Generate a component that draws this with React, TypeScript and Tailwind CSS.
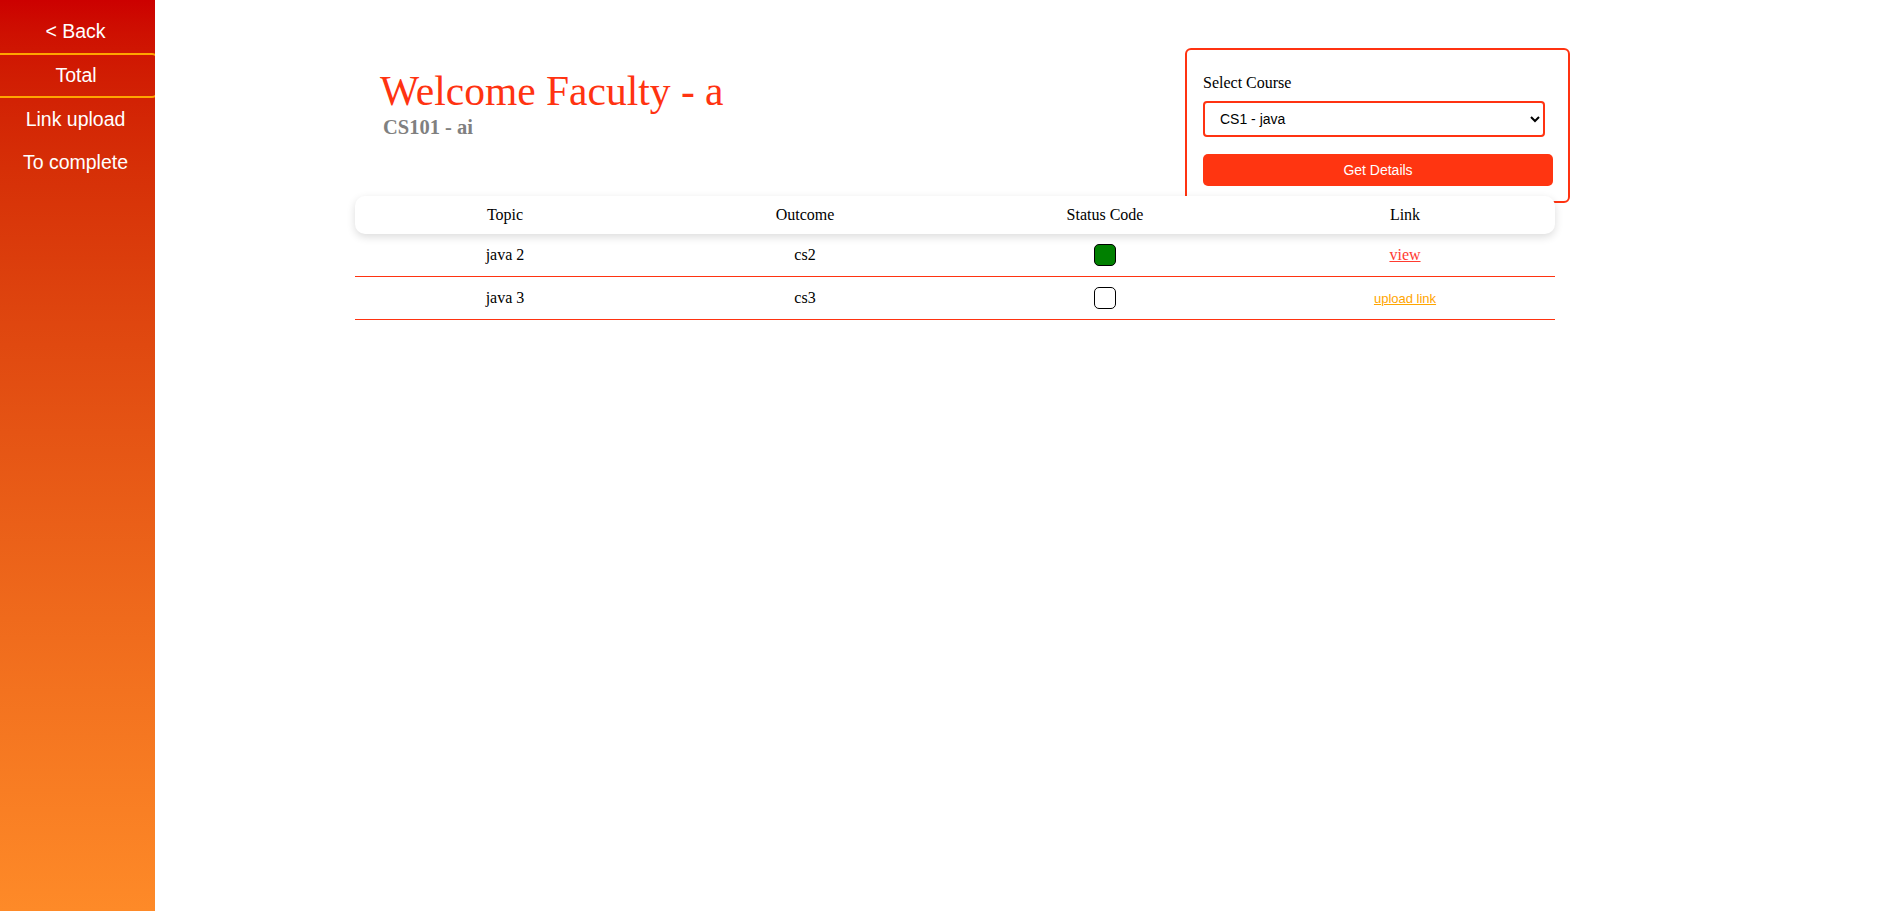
const rows = [
  { topic: "java 2", outcome: "cs2", done: true },
  { topic: "java 3", outcome: "cs3", done: false },
];

const serif = "font-['Liberation_Serif','Times_New_Roman',serif]";
const sans = "font-['Liberation_Sans',Arial,sans-serif]";

function Sidebar() {
  return (
    <aside
      className={`w-[155px] shrink-0 min-h-[911px] overflow-hidden bg-gradient-to-b from-[#cc0000] to-[#fe8a28] pt-[10px] pr-[4px] text-white text-[19.5px] ${sans}`}
    >
      <div className="h-[43px] flex items-center justify-center">&lt; Back</div>
      <div className="h-[45px] ml-[-6px] mr-[-7px] flex items-center justify-center border-2 border-[#ffa500] rounded-[6px]">
        Total
      </div>
      <div className="h-[43px] flex items-center justify-center">Link upload</div>
      <div className="h-[43px] flex items-center justify-center">To complete</div>
    </aside>
  );
}

function CoursePicker() {
  return (
    <div className="w-[385px] h-[155px] mr-[-15px] mb-[-7px] border-2 border-[#ff3311] rounded-[6px] pt-[24px] px-[16px]">
      <label className={`block text-[16px] leading-[18px] text-black ${serif}`}>Select Course</label>
      <select
        className={`mt-[9px] w-[342px] h-[36px] border-2 border-[#ff3311] rounded-[4px] pl-[11px] pr-[4px] text-[14px] text-black bg-white ${sans}`}
        defaultValue="cs1"
      >
        <option value="cs1">CS1 - java</option>
      </select>
      <button
        className={`mt-[17px] w-[350px] h-[32px] bg-[#ff3511] rounded-[5px] text-white text-[14px] ${sans}`}
      >
        Get Details
      </button>
    </div>
  );
}

export default function App() {
  return (
    <div className="flex min-h-[911px] bg-white">
      <Sidebar />
      <main className="pl-[200px] pt-[48px]">
        <div className="w-[1200px] flex justify-between items-start">
          <div className={`ml-[25px] mt-[20px] ${serif}`}>
            <h1 className="text-[41.5px] leading-[46px] text-[#ff3311]">Welcome Faculty - a</h1>
            <h2 className="text-[20.5px] leading-[24px] mt-[1px] font-bold text-[#808080] ml-[3px]">CS101 - ai</h2>
          </div>
          <CoursePicker />
        </div>

        <div className={`relative z-10 w-[1200px] text-[16px] text-black ${serif}`}>
          <div className="grid grid-cols-4 h-[38px] items-center text-center bg-white rounded-[10px] shadow-[0_3px_8px_rgba(0,0,0,0.14)]">
            <div>Topic</div>
            <div>Outcome</div>
            <div>Status Code</div>
            <div>Link</div>
          </div>
          {rows.map((r) => (
            <div
              key={r.topic}
              className="grid grid-cols-4 h-[43px] items-center text-center border-b border-[#ff3311]"
            >
              <div>{r.topic}</div>
              <div>{r.outcome}</div>
              <div className="flex justify-center">
                <span
                  className={`block w-[22px] h-[22px] rounded-[5px] border border-black ${
                    r.done ? "bg-[#008000]" : "bg-white"
                  }`}
                />
              </div>
              <div>
                {r.done ? (
                  <a href="#" className="underline text-[#ff3b30]">
                    view
                  </a>
                ) : (
                  <a href="#" className={`underline text-[#ffa500] text-[13px] ${sans}`}>
                    upload link
                  </a>
                )}
              </div>
            </div>
          ))}
        </div>
      </main>
    </div>
  );
}
